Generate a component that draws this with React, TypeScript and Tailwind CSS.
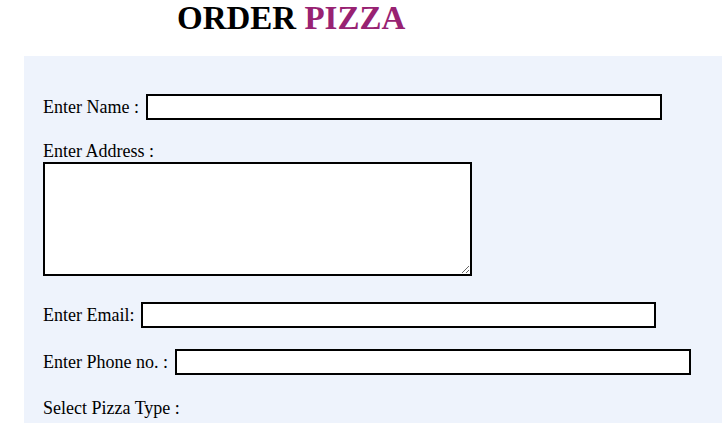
import React from "react";

export default function App() {
  return (
    <div className="min-h-[423px] bg-white font-['Liberation_Serif','Times_New_Roman',serif] text-black">
      <h1 className="ml-[177px] text-[33px] leading-[37px] font-bold">
        ORDER <span className="text-[#982272]">PIZZA</span>
      </h1>
      <div className="ml-[24px] mt-[19px] min-h-[367px] bg-[#eef3fc] pl-[19px] pt-[38px] text-[18px]">
        <div className="flex h-[26px] items-center gap-[7px]">
          <span className="leading-[20px]">Enter Name :</span>
          <input type="text" className="box-border h-[26px] w-[516px] border-2 border-black bg-white outline-none" />
        </div>
        <div className="mt-[21px] leading-[20px]">Enter Address :</div>
        <textarea className="mt-[1px] box-border block h-[114px] w-[429px] border-2 border-black bg-white outline-none" />
        <div className="mt-[26px] flex h-[26px] items-center gap-[7px]">
          <span className="leading-[20px]">Enter Email:</span>
          <input type="email" className="box-border h-[26px] w-[515px] border-2 border-black bg-white outline-none" />
        </div>
        <div className="mt-[21px] flex h-[26px] items-center gap-[7.5px]">
          <span className="leading-[20px]">Enter Phone no. :</span>
          <input type="tel" className="box-border h-[26px] w-[516px] border-2 border-black bg-white outline-none" />
        </div>
        <div className="mt-[23px] leading-[20px]">Select Pizza Type :</div>
      </div>
    </div>
  );
}
